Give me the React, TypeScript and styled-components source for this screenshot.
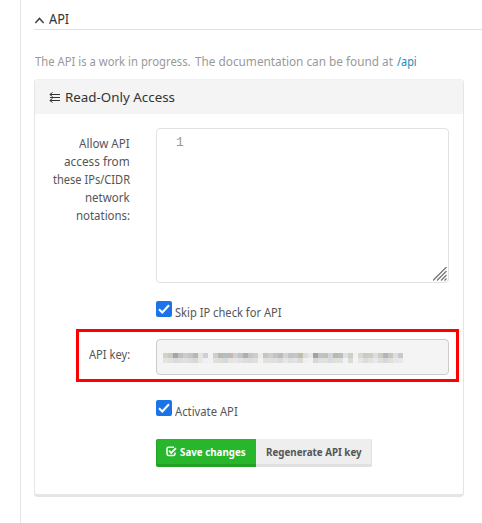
import React, { useLayoutEffect, useRef, useState } from "react";
import styled, { createGlobalStyle } from "styled-components";

const Global = createGlobalStyle`
  * { box-sizing: border-box; }
  body { margin: 0; background: #fff; overflow: hidden; font: 12.5px/18px "Noto Sans", "Open Sans", sans-serif; color: #555; }
`;

const FitBox = styled.span<{ $w: number }>`
  display: inline-block;
  width: ${(p) => p.$w}px;
  white-space: nowrap;
`;
const FitInner = styled.span`
  display: inline-block;
  transform-origin: 0 50%;
`;

/* Condenses a line of text to the given width. */
function Fit({ w, children }: { w: number; children: React.ReactNode }) {
  const ref = useRef<HTMLSpanElement>(null);
  const [scale, setScale] = useState(1);
  useLayoutEffect(() => {
    if (ref.current) setScale(w / ref.current.offsetWidth);
  }, [w]);
  return (
    <FitBox $w={w}>
      <FitInner ref={ref} style={{ transform: `scaleX(${scale})` }}>{children}</FitInner>
    </FitBox>
  );
}

const Page = styled.main`
  width: 462px;
  height: 523px;
  margin-left: 20px;
  padding-left: 14px;
  border-left: 1px solid #e5e5e5;
`;
const Heading = styled.h1`
  display: flex;
  align-items: center;
  gap: 5px;
  height: 30px;
  margin: 0 0 0 -1px;
  padding: 9px 0 0 1px;
  border-bottom: 1px solid #e0e0e0;
  color: #333;
  font-size: 14px;
  font-weight: 400;
  & > svg { margin-top: 3px; }
`;
const Intro = styled.p`
  display: flex;
  gap: 4px;
  height: 49px;
  margin: 0;
  padding-top: 23px;
  color: #999;
`;
const Link = styled.a`
  color: #158cba;
`;
const Panel = styled.section`
  width: 430px;
  height: 418px;
  margin-left: -1px;
  border: 1px solid #e5e5e5;
  border-top-color: #f0f0f0;
  border-bottom-width: 3px;
  border-radius: 4px;
`;
const PanelHeader = styled.header`
  display: flex;
  align-items: center;
  gap: 4px;
  height: 34px;
  padding: 0 0 0 14px;
  border-radius: 3px 3px 0 0;
  background: #f4f4f4;
  color: #333;
  font-size: 13px;
`;
const Form = styled.form`
  display: grid;
  grid-template-columns: 95px 293px;
  column-gap: 26px;
`;
const Label = styled.label`
  display: flex;
  flex-direction: column;
  align-items: flex-end;
  padding-top: 21px;
`;
const Editor = styled.div`
  display: flex;
  justify-content: space-between;
  height: 155px;
  margin-top: 14px;
  padding: 5px 1px 1px 19px;
  border: 1px solid #e2e2e2;
  border-radius: 4px;
  color: #999;
  font: 13px/18px "Liberation Mono", monospace;
  & > svg { align-self: flex-end; }
`;
const CheckRow = styled.label<{ $top: number }>`
  display: flex;
  grid-column: 2;
  gap: 3px;
  height: 20px;
  margin-top: ${(p) => p.$top}px;
  & > span { margin-top: 3px; }
`;
const KeyRow = styled.div`
  display: grid;
  grid-column: 1 / -1;
  grid-template-columns: 41px 293px;
  column-gap: 26px;
  width: 383px;
  height: 53px;
  margin: 8px 0 0 41px;
  padding: 7px 0 0 10px;
  border: 3px solid #f00;
`;
const KeyLabel = styled.label`
  padding-top: 7px;
`;
const KeyField = styled.div`
  height: 36px;
  padding: 13px 0 0 6px;
  border: 1px solid #ccc;
  border-radius: 4px;
  background: #f4f4f4;
`;
const Actions = styled.div`
  display: flex;
  grid-column: 2;
  margin-top: 19px;
`;
const Button = styled.button<{ $primary?: boolean }>`
  display: flex;
  align-items: center;
  gap: 3px;
  width: ${(p) => (p.$primary ? 100 : 116)}px;
  height: 28px;
  padding: 0 0 0 ${(p) => (p.$primary ? 9 : 10)}px;
  border: 0 solid ${(p) => (p.$primary ? "#23a127" : "#e1e1e1")};
  border-width: ${(p) => (p.$primary ? "0 0 3px 1px" : "0 1px 3px 0")};
  border-radius: ${(p) => (p.$primary ? "2px 0 0 2px" : "0 2px 2px 0")};
  background: ${(p) => (p.$primary ? "#28b62c" : "#eee")};
  color: ${(p) => (p.$primary ? "#fff" : "#555")};
  font: 700 10.5px/18px "Noto Sans", sans-serif;
`;

const topTones = "d2d2cc d0c8ba a2a6aa bcc0be cccccc c0c6c8 bab8ac e4e4e0 cdd0d8 f0f2f4 ccd0ca bab8b0 b2c0c4 c2bab2 d0d0d0 c4c4c0 acb0ae c4c8c4 cccec8 eceeee c8c4c0 ccd0cc c4c4c8 bbbbbb d4d4cc c4c4c4 c0c8c8 c4bca8 d8dee0 ebe8df 9ca4a8 c0c4c0 c4beb8 ccd6de bfb6aa b8c0bc dde2e4 cdd0ca f2f2f2 dcd6cc c6cccc d0ccc0 dadee0 cccdbe b4b5bb c6c6c2 dedede c6c8cc".split(" ");
const bottomTones = "e4e4dc e0e0dc d8dadc dedede e0e0dc dcdcdc d8d8d4 e8e8e8 eef2f4 f2f2f2 e0e0dc dcdcdc d6d8da e4e4e0 e6e6e6 e2e2e2 dcdedc dcdcdc e0e0e0 f2f2f2 e4e0dc e0e0e0 e0e0e0 d8dadc e6e6e6 dededf e2e2e2 dcdad4 f0f0f0 f2f2f2 d5d7d8 dfdfdf e0e0dc d8dcdf e0dfd8 dce0de f0f2f2 d9dcd8 f4f4f4 e6e6e6 dcdcdc e2e2de e8e8e8 dedede d8d8db dededa e6e6e6 e7e8ec".split(" ");

function Check() {
  return (
    <svg width="16" height="16" viewBox="0 0 16 16">
      <rect width="16" height="16" rx="2" fill="#1a73e8" />
      <path d="M3 8.3 6.3 11.5 13 4.3" fill="none" stroke="#fff" strokeWidth="2.1" />
    </svg>
  );
}

export default function App() {
  return (
    <>
      <Global />
      <Page>
        <Heading>
          <svg width="9" height="7" viewBox="0 0 9 7">
            <path d="M.3 6 4.5 1.5 8.7 6" fill="none" stroke="#444" strokeWidth="1.6" />
          </svg>
          <Fit w={20}>API</Fit>
        </Heading>
        <Intro>
          <Fit w={156}>The API is a work in progress.</Fit>
          <Fit w={198}>The documentation can be found at</Fit>
          <Link><Fit w={20}>/api</Fit></Link>
        </Intro>
        <Panel>
          <PanelHeader>
            <svg width="12" height="11" viewBox="0 0 12 11">
              <path d="M1 2.5h10M1 5.5h10M1 8.5h10M3.5.5.8 2.5l2.7 2M3.5 6.5.8 8.5l2.7 2" fill="none" stroke="#333" strokeWidth="1" />
            </svg>
            <Fit w={110}>Read-Only Access</Fit>
          </PanelHeader>
          <Form>
            <Label>
              <Fit w={51}>Allow API</Fit>
              <Fit w={66}>access from</Fit>
              <Fit w={77}>these IPs/CIDR</Fit>
              <Fit w={45}>network</Fit>
              <Fit w={54}>notations:</Fit>
            </Label>
            <Editor>
              <span>1</span>
              <svg width="14" height="14" viewBox="0 0 14 14">
                <path d="M0 13.5 13.5 0M4 13.5 13.5 4M8 13.5 13.5 8M11.5 13.5l2-2" fill="none" stroke="#777" strokeWidth="1.3" />
              </svg>
            </Editor>
            <CheckRow $top={18}><Check /><Fit w={107}>Skip IP check for API</Fit></CheckRow>
            <KeyRow>
              <KeyLabel><Fit w={41}>API key:</Fit></KeyLabel>
              <KeyField>
                <svg width="240" height="10" shapeRendering="crispEdges" display="block">
                  {topTones.map((c, i) => <rect key={i} x={i * 5} width="5" height="5" fill={"#" + c} />)}
                  {bottomTones.map((c, i) => <rect key={i} x={i * 5} y="5" width="5" height="5" fill={"#" + c} />)}
                </svg>
              </KeyField>
            </KeyRow>
            <CheckRow $top={18}><Check /><Fit w={63}>Activate API</Fit></CheckRow>
            <Actions>
              <Button type="button" $primary>
                <svg width="11" height="11" viewBox="0 0 11 11">
                  <path d="M8 1.3H2.5Q1 1.3 1 2.8v5Q1 9.4 2.5 9.4h5Q9 9.4 9 7.8V6.5" fill="none" stroke="#fff" strokeWidth="1.5" />
                  <path d="m3 4.7 2.2 2.2L10 2.2" fill="none" stroke="#fff" strokeWidth="1.8" />
                </svg>
                <Fit w={66}>Save changes</Fit>
              </Button>
              <Button type="button"><Fit w={96}>Regenerate API key</Fit></Button>
            </Actions>
          </Form>
        </Panel>
      </Page>
    </>
  );
}
